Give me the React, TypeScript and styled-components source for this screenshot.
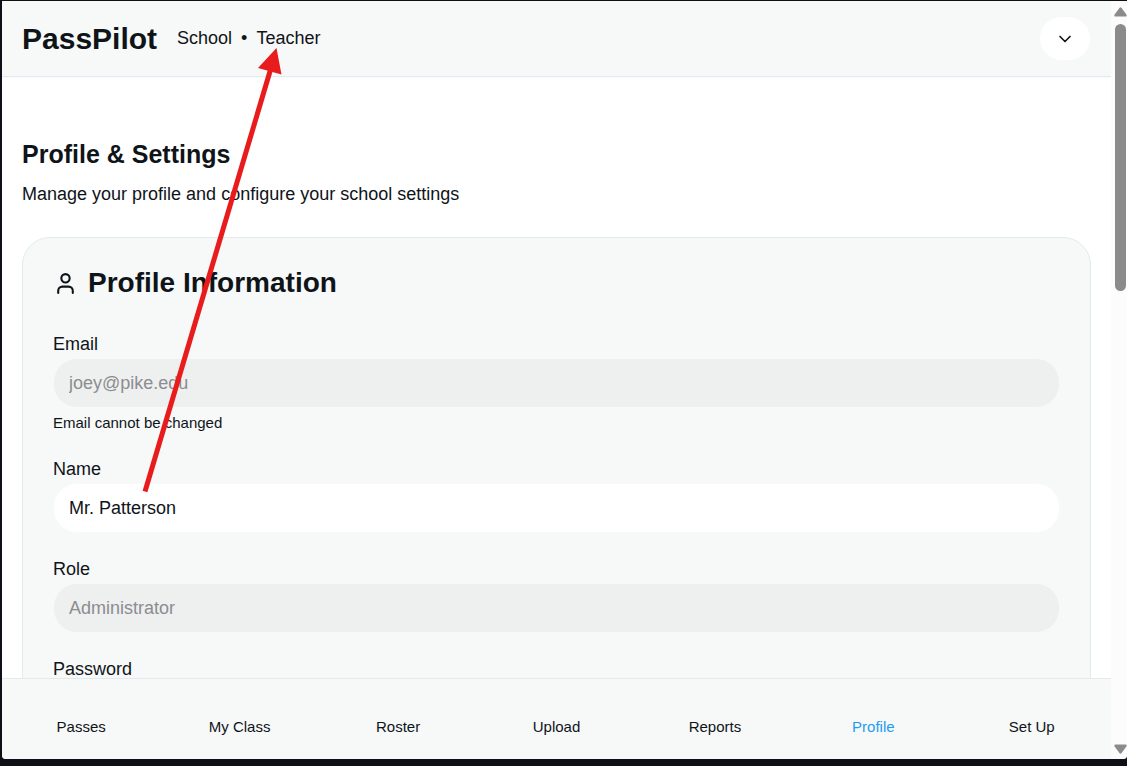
import React from "react";
import styled, { createGlobalStyle } from "styled-components";
import { ChevronDown, User } from "lucide-react";

const GlobalStyle = createGlobalStyle`
  *, *::before, *::after { box-sizing: border-box; }
  body {
    margin: 0;
    background: #0f1017;
    color: #0f1419;
    font-family: "Liberation Sans", Arial, sans-serif;
    font-size: 18px;
    line-height: 24px;
    overflow: hidden;
  }
  h1, h2, p { margin: 0; }
`;

const Desktop = styled.div`
  position: relative;
  height: 100vh;
  padding: 1px 0 7px 2px;
`;

const Window = styled.div`
  display: flex;
  height: 100%;
  background: #ffffff;
  border-radius: 0 0 4px 4px;
  overflow: hidden;
`;

const Page = styled.div`
  flex: 1;
  min-width: 0;
  display: flex;
  flex-direction: column;
`;

const Header = styled.header`
  display: flex;
  align-items: center;
  padding: 16px 20px;
  background: #f7f8f8;
  border-bottom: 1px solid #e1eaef;
  box-shadow: 0 1px 2px rgba(29, 155, 240, 0.06);
`;

const Brand = styled.span`
  margin-right: 20px;
  font-size: 30px;
  font-weight: 700;
  line-height: 36px;
`;

const Crumbs = styled.div`
  display: flex;
  gap: 9px;
  padding-bottom: 2px;
`;

const MenuButton = styled.button`
  display: flex;
  align-items: center;
  justify-content: center;
  width: 50px;
  height: 43px;
  margin-left: auto;
  margin-right: 1px;
  padding: 0;
  border: 0;
  border-radius: 22px;
  background: #ffffff;
  color: #0f1419;
`;

const Main = styled.main`
  flex: 1;
  min-height: 0;
  overflow: hidden;
  padding: 61px 20px 0;
`;

const PageTitle = styled.h1`
  font-size: 25px;
  line-height: 32px;
`;

const Intro = styled.p`
  margin: 12px 0 31px;
`;

const Card = styled.section`
  padding: 30px;
  border: 1px solid #e1eaef;
  border-radius: 28px;
  background: #f7f8f8;
`;

const CardTitle = styled.h2`
  display: flex;
  align-items: center;
  gap: 10px;
  margin-bottom: 34px;
  font-size: 28px;
  line-height: 30px;
`;

const FieldRow = styled.div`
  display: flex;
  flex-direction: column;
  margin-bottom: 24px;
`;

const Label = styled.label`
  margin-bottom: 2px;
`;

const TextInput = styled.input`
  width: 100%;
  height: 50px;
  padding: 0 15px;
  border: 1px solid #f7f9fa;
  border-radius: 24px;
  background: #ffffff;
  color: #0f1419;
  font: inherit;

  &:disabled {
    background: #eeefef;
    color: #8b8d90;
  }
`;

const Hint = styled.p`
  margin-top: 5px;
  font-size: 15px;
  line-height: 20px;
`;

const TabBar = styled.nav`
  display: grid;
  grid-template-columns: repeat(7, 1fr);
  background: #f7f8f8;
  border-top: 1px solid #e1eaef;
`;

const Tab = styled.a<{ $active?: boolean }>`
  padding: 38px 0 22px;
  color: ${(p) => (p.$active ? "#1e9df1" : "#0f1419")};
  font-size: 15px;
  line-height: 20px;
  text-align: center;
  text-decoration: none;
`;

const ScrollTrack = styled.div`
  display: flex;
  flex-direction: column;
  align-items: center;
  width: 16px;
  padding: 6px 0 5px 2px;
  background: #fcfcfc;
`;

const ScrollThumb = styled.div`
  width: 11px;
  height: 267px;
  margin: 7px 0 auto;
  border-radius: 6px;
  background: #8b8b8b;
`;

const Annotation = styled.svg`
  position: absolute;
  top: 48px;
  left: 142px;
  pointer-events: none;
`;

type FieldProps = {
  id: string;
  label: string;
  value?: string;
  disabled?: boolean;
  hint?: string;
  type?: string;
};

function Field({ id, label, value, disabled, hint, type = "text" }: FieldProps) {
  return (
    <FieldRow>
      <Label htmlFor={id}>{label}</Label>
      <TextInput id={id} type={type} defaultValue={value} disabled={disabled} />
      {hint && <Hint>{hint}</Hint>}
    </FieldRow>
  );
}

const tabs = ["Passes", "My Class", "Roster", "Upload", "Reports", "Profile", "Set Up"];

export default function App() {
  return (
    <>
      <GlobalStyle />
      <Desktop>
        <Window>
          <Page>
            <Header>
              <Brand>PassPilot</Brand>
              <Crumbs>
                <span>School</span>
                <span>•</span>
                <span>Teacher</span>
              </Crumbs>
              <MenuButton type="button" aria-label="Open menu">
                <ChevronDown size={20} />
              </MenuButton>
            </Header>
            <Main>
              <PageTitle>Profile &amp; Settings</PageTitle>
              <Intro>Manage your profile and configure your school settings</Intro>
              <Card>
                <CardTitle>
                  <User size={25} />
                  Profile Information
                </CardTitle>
                <Field
                  id="email"
                  label="Email"
                  value="joey@pike.edu"
                  disabled
                  hint="Email cannot be changed"
                />
                <Field id="name" label="Name" value="Mr. Patterson" />
                <Field id="role" label="Role" value="Administrator" disabled />
                <Field id="password" label="Password" type="password" />
              </Card>
            </Main>
            <TabBar>
              {tabs.map((tab) => (
                <Tab key={tab} href="#" $active={tab === "Profile"}>
                  {tab}
                </Tab>
              ))}
            </TabBar>
          </Page>
          <ScrollTrack>
            <svg width="13" height="10" viewBox="0 0 13 10" fill="#8b8b8b">
              <path d="M5.4 .9Q6.5 -.2 7.6 .9L12.4 7.5Q13.2 9.6 11.5 9.6H1.5Q-.2 9.6 .6 7.5Z" />
            </svg>
            <ScrollThumb />
            <svg width="13" height="10" viewBox="0 0 13 10" fill="#8b8b8b">
              <path d="M5.4 9.1Q6.5 10.2 7.6 9.1L12.4 2.5Q13.2 .4 11.5 .4H1.5Q-.2 .4 .6 2.5Z" />
            </svg>
          </ScrollTrack>
        </Window>
        <Annotation width="142" height="446" viewBox="0 0 142 446" aria-hidden="true">
          <path d="M3 443.5L129 20" stroke="#e81c1c" strokeWidth="5" />
          <path d="M134.5 0L116 20L139.5 26.5Z" fill="#e81c1c" />
        </Annotation>
      </Desktop>
    </>
  );
}
